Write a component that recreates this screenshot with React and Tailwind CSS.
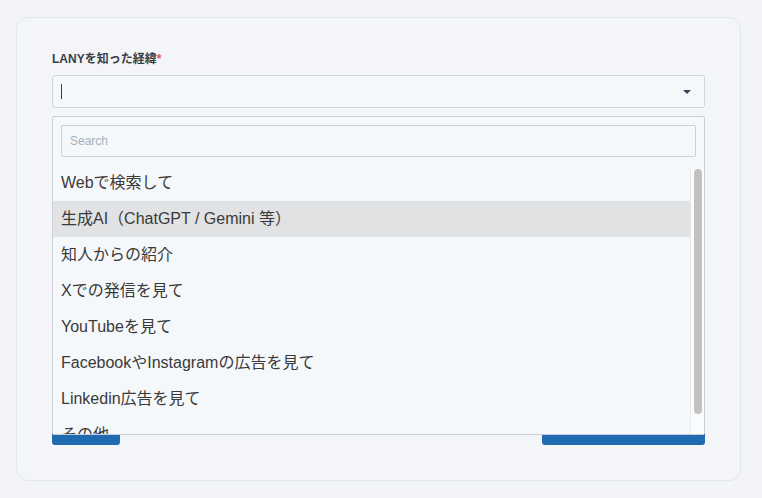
const options = [
  "Webで検索して",
  "生成AI（ChatGPT / Gemini 等）",
  "知人からの紹介",
  "Xでの発信を見て",
  "YouTubeを見て",
  "FacebookやInstagramの広告を見て",
  "Linkedin広告を見て",
  "その他",
];

const font = { fontFamily: '"Liberation Sans", Arial, "Noto Sans CJK JP", sans-serif' };

export default function App() {
  return (
    <div className="min-h-[498px] w-[762px] bg-[#f2f4f7] pt-[17px] pl-4" style={font}>
      <div className="w-[725px] h-[464px] rounded-[12px] border border-[#e3e6ea] bg-[#f3f5f8] px-[35px] pt-[34px] pb-[34px]">
        <div className="relative">
          <label className="block h-[23px] text-[12px] font-bold text-[#3b3f45] leading-[15px]">
            LANYを知った経緯<span className="text-[#f2545b]">*</span>
          </label>
          <div className="flex h-[33px] items-center rounded-[3px] border border-[#cbd6e2] bg-[#f5f8fa] pl-2 pr-[13px]">
            <span className="h-[15px] w-px bg-[#33475b]" />
            <span className="ml-auto h-0 w-0 border-x-[4px] border-t-[4px] border-x-transparent border-t-[#33475b]" />
          </div>
          <div className="h-[303px]" />
          <div className="flex justify-between">
            <div className="h-[34px] w-[68px] rounded-[3px] bg-[#1f6ab0]" />
            <div className="h-[34px] w-[163px] rounded-[3px] bg-[#1f6ab0]" />
          </div>

          <div className="absolute left-0 top-[64px] w-full h-[319px] rounded-[2px] border border-[#cbd0d6] bg-[#f5f8fa] flex flex-col">
            <div className="px-2 pt-2 pb-2">
              <div className="flex h-[32px] items-center rounded-[2px] border border-[#cbd0d6] bg-[#f5f8fa] px-2 text-[12px] text-[#a6afb9]">
                Search
              </div>
            </div>
            <div className="flex flex-1 overflow-hidden">
              <div className="flex-1 overflow-hidden">
                {options.map((o, i) => (
                  <div
                    key={o}
                    className={`flex h-[36px] items-center pl-2 text-[16px] text-[#3a3a3a] ${i === 1 ? "bg-[#e1e2e4]" : ""}`}
                  >
                    {o}
                  </div>
                ))}
              </div>
              <div className="mt-[3px] w-[14px] border-l border-[#e6e8ea] bg-[#fafbfc] pt-px pl-[3px]">
                <div className="h-[245px] w-[8px] rounded-full bg-[#c1c1c1]" />
              </div>
            </div>
          </div>
        </div>
      </div>
    </div>
  );
}
